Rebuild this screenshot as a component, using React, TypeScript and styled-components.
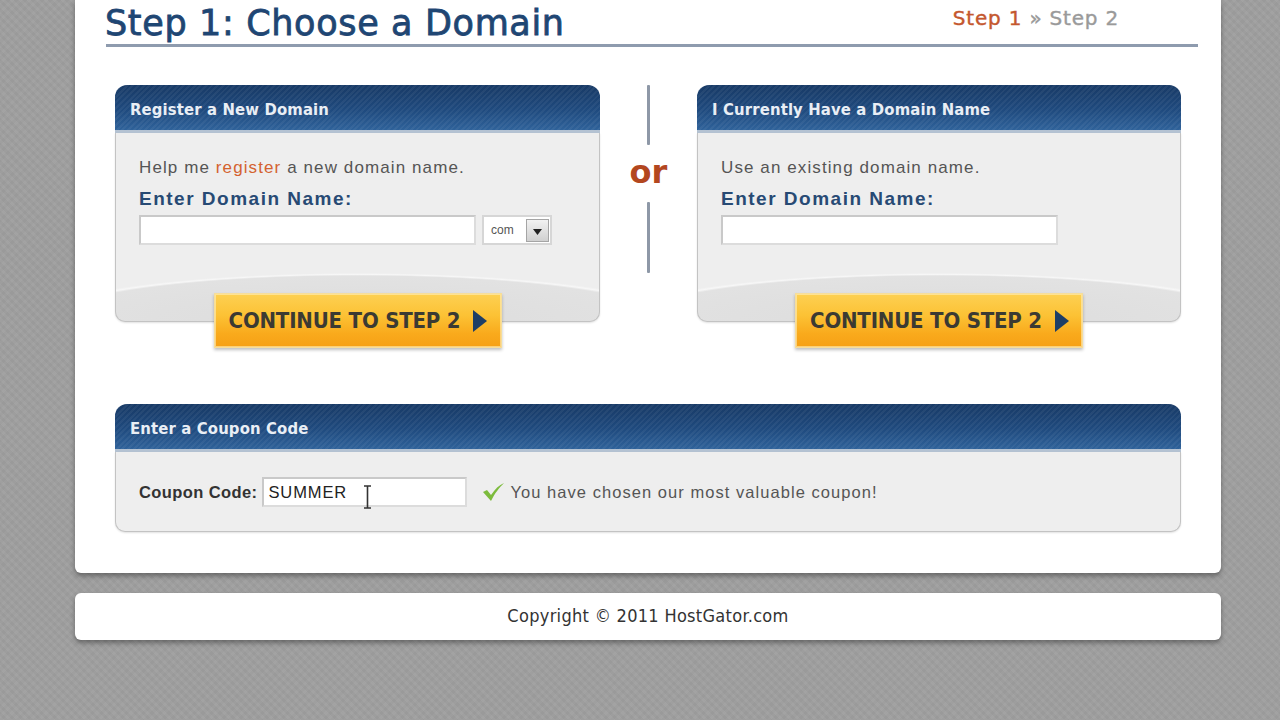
import React from "react";
import styled, { createGlobalStyle } from "styled-components";

const Global = createGlobalStyle`
  html, body { margin: 0; padding: 0; }
  body {
    width: 1280px;
    height: 720px;
    overflow: hidden;
    font-family: "Liberation Sans", Arial, sans-serif;
    background-color: #9f9f9f;
    background-image:
      repeating-linear-gradient(45deg, rgba(255,255,255,0.018) 0 3px, rgba(0,0,0,0.018) 3px 6px),
      repeating-linear-gradient(-45deg, rgba(255,255,255,0.015) 0 3px, rgba(0,0,0,0.015) 3px 6px);
  }
`;

const Page = styled.div`
  display: flex;
  flex-direction: column;
  gap: 20px;
  padding-left: 75px;
  width: 1146px;
`;

const Card = styled.div`
  background: #ffffff;
  border-radius: 0 0 6px 6px;
  box-shadow: 0 3px 5px rgba(0, 0, 0, 0.35);
  padding-bottom: 41px;
`;

const HeadRow = styled.div`
  display: flex;
  justify-content: space-between;
  align-items: flex-end;
  margin: 0 23px 0 31px;
  height: 44px;
  border-bottom: 3px solid #8e9bae;
`;

const Title = styled.h1`
  margin: 0 0 0 -1px;
  font-family: "DejaVu Sans", Verdana, sans-serif;
  font-weight: normal;
  font-size: 35px;
  line-height: 42px;
  color: #1f4673;
  letter-spacing: 0.65px;
  -webkit-text-stroke: 0.8px #1f4673;
`;

const Steps = styled.div`
  font-family: "DejaVu Sans", Verdana, sans-serif;
  font-size: 20px;
  line-height: 26px;
  letter-spacing: 0.8px;
  margin: 0 79px 13px 0;
  color: #9a9a9a;
  -webkit-text-stroke: 0.4px currentColor;
`;

const StepOn = styled.span`
  color: #c4572e;
`;

const Panels = styled.div`
  display: flex;
  margin: 38px 40px 0;
`;

const Column = styled.div<{ $w: number }>`
  width: ${(p) => p.$w}px;
  display: flex;
  flex-direction: column;
  align-items: center;
`;

const Panel = styled.div`
  width: 100%;
  display: flex;
  flex-direction: column;
`;

const PanelHead = styled.div`
  height: 48px;
  box-sizing: border-box;
  padding: 3px 0 0 15px;
  border-radius: 12px 12px 0 0;
  background:
    repeating-linear-gradient(135deg, rgba(255,255,255,0.05) 0 2px, rgba(255,255,255,0) 2px 4px),
    linear-gradient(#183a66 0%, #1f4a7e 55%, #2f629a 100%);
  border-bottom: 3px solid #b4c2d2;
  display: flex;
  align-items: center;
  font-family: "DejaVu Sans Condensed", "DejaVu Sans", sans-serif;
  font-weight: bold;
  font-size: 16.5px;
  letter-spacing: 0.15px;
  color: #e9eef5;
`;

const PanelBody = styled.div<{ $h: number; $curve?: boolean }>`
  height: ${(p) => p.$h}px;
  box-sizing: border-box;
  border: 1px solid #c3c3c3;
  border-top: none;
  border-radius: 0 0 10px 10px;
  box-shadow: 0 1px 2px rgba(0,0,0,0.12);
  background: ${(p) =>
    p.$curve
      ? "radial-gradient(ellipse 68% 48px at 50% 100%, #dcdcdc 0%, #e2e2e2 94%, #f7f7f7 97%, rgba(238,238,238,0) 100%), #eeeeee"
      : "#eeeeee"};
`;

const DomainForm = styled.div`
  padding: 25px 23px 0;
  display: flex;
  flex-direction: column;
`;

const Intro = styled.div`
  font-size: 17px;
  line-height: 20px;
  letter-spacing: 1.1px;
  color: #555555;
`;

const Hl = styled.span`
  color: #d4622f;
`;

const Label = styled.div`
  margin-top: 10px;
  font-size: 19px;
  line-height: 22px;
  letter-spacing: 1.5px;
  font-weight: bold;
  color: #274a74;
`;

const InputRow = styled.div`
  display: flex;
  gap: 6px;
  margin-top: 5px;
`;

const TextBox = styled.div<{ $w: number }>`
  position: relative;
  width: ${(p) => p.$w}px;
  height: 30px;
  box-sizing: border-box;
  background: #ffffff;
  border: 2px solid #c9c9c9;
  border-right-color: #dcdcdc;
  border-bottom-color: #dcdcdc;
  display: flex;
  align-items: center;
  padding-left: 4px;
  font-size: 16.5px;
  letter-spacing: 0.9px;
  color: #222;
`;

const Select = styled.div`
  width: 70px;
  height: 30px;
  box-sizing: border-box;
  border: 2px solid #d6d6d6;
  background: #ffffff;
  display: flex;
  align-items: center;
  justify-content: space-between;
  padding: 0 1px 0 7px;
  font-size: 12px;
  color: #555;
`;

const SelectBtn = styled.div`
  width: 23px;
  height: 23px;
  box-sizing: border-box;
  border: 1px solid #a5a5a5;
  background: linear-gradient(#f2f2f2, #d0d0d0);
  display: flex;
  align-items: center;
  justify-content: center;
  padding-top: 3px;
`;

const Button = styled.div`
  margin-top: -29px;
  width: 288px;
  height: 55px;
  box-sizing: border-box;
  position: relative;
  z-index: 1;
  border: 1px solid #f6dd9a;
  box-shadow: 0 2px 3px rgba(0,0,0,0.25), inset 0 0 0 1px rgba(255,240,190,0.6);
  background: linear-gradient(#fdd052 0%, #fcc235 40%, #f9aa1c 75%, #f6a015 100%);
  display: flex;
  align-items: center;
  justify-content: center;
  gap: 12px;
  padding-left: 2px;
`;

const ButtonText = styled.span`
  font-family: "DejaVu Sans Condensed", "DejaVu Sans", sans-serif;
  font-weight: bold;
  font-size: 22px;
  letter-spacing: -0.2px;
  color: #3b3a33;
`;

const OrCol = styled.div`
  width: 97px;
  display: flex;
  flex-direction: column;
  align-items: center;
`;

const OrLine = styled.div<{ $h: number }>`
  width: 3px;
  height: ${(p) => p.$h}px;
  background: #8e98a7;
  border-radius: 1px;
`;

const OrText = styled.div`
  height: 57px;
  display: flex;
  align-items: center;
  font-family: "DejaVu Sans", sans-serif;
  font-weight: bold;
  font-size: 32px;
  color: #b3471f;
  padding-bottom: 4px;
  box-sizing: border-box;
`;

const CouponWrap = styled.div`
  margin: 56px 40px 0;
`;

const CouponRow = styled.div`
  display: flex;
  align-items: center;
  padding: 25px 23px 0;
  gap: 5px;
`;

const CouponLabel = styled.span`
  font-size: 16.5px;
  letter-spacing: 0.4px;
  font-weight: bold;
  color: #333333;
`;

const Ok = styled.div`
  display: flex;
  align-items: center;
  margin-left: 10px;
  gap: 5px;
  font-size: 16.5px;
  letter-spacing: 1.05px;
  color: #555555;
`;

const Cursor = styled.svg`
  position: absolute;
  left: 99px;
  top: 6px;
`;

const Footer = styled.div`
  height: 47px;
  background: #ffffff;
  border-radius: 6px;
  box-shadow: 0 3px 5px rgba(0, 0, 0, 0.35);
  display: flex;
  align-items: center;
  justify-content: center;
  padding-bottom: 3px;
  box-sizing: border-box;
  font-family: "DejaVu Sans Condensed", "DejaVu Sans", sans-serif;
  font-size: 18px;
  letter-spacing: 0.3px;
  color: #333333;
`;

const Arrow = () => (
  <svg width="16" height="24" viewBox="0 0 16 24">
    <path d="M1 1 L15 12 L1 23 Z" fill="#1e3e66" />
  </svg>
);

const ContinueButton = () => (
  <Button>
    <ButtonText>CONTINUE TO STEP 2</ButtonText>
    <Arrow />
  </Button>
);

export default function App() {
  return (
    <>
      <Global />
      <Page>
        <Card>
          <HeadRow>
            <Title>Step 1: Choose a Domain</Title>
            <Steps>
              <StepOn>Step 1</StepOn> » Step 2
            </Steps>
          </HeadRow>

          <Panels>
            <Column $w={485}>
              <Panel>
                <PanelHead>Register a New Domain</PanelHead>
                <PanelBody $h={189} $curve>
                  <DomainForm>
                    <Intro>
                      Help me <Hl>register</Hl> a new domain name.
                    </Intro>
                    <Label>Enter Domain Name:</Label>
                    <InputRow>
                      <TextBox $w={337} />
                      <Select>
                        com
                        <SelectBtn>
                          <svg width="9" height="6" viewBox="0 0 9 6">
                            <path d="M0 0 L9 0 L4.5 6 Z" fill="#222" />
                          </svg>
                        </SelectBtn>
                      </Select>
                    </InputRow>
                  </DomainForm>
                </PanelBody>
              </Panel>
              <ContinueButton />
            </Column>

            <OrCol>
              <OrLine $h={60} />
              <OrText>or</OrText>
              <OrLine $h={71} />
            </OrCol>

            <Column $w={484}>
              <Panel>
                <PanelHead>I Currently Have a Domain Name</PanelHead>
                <PanelBody $h={189} $curve>
                  <DomainForm>
                    <Intro>Use an existing domain name.</Intro>
                    <Label>Enter Domain Name:</Label>
                    <InputRow>
                      <TextBox $w={337} />
                    </InputRow>
                  </DomainForm>
                </PanelBody>
              </Panel>
              <ContinueButton />
            </Column>
          </Panels>

          <CouponWrap>
            <Panel>
              <PanelHead>Enter a Coupon Code</PanelHead>
              <PanelBody $h={80}>
                <CouponRow>
                  <CouponLabel>Coupon Code:</CouponLabel>
                  <TextBox $w={205}>
                    SUMMER
                    <Cursor width="9" height="24" viewBox="0 0 9 24">
                      <path d="M1 1 H8 M4.5 1 V23 M1 23 H8" stroke="#333" strokeWidth="1.6" fill="none" />
                    </Cursor>
                  </TextBox>
                  <Ok>
                    <svg width="23" height="18" viewBox="0 0 23 18">
                      <path d="M1 9 L5 7 L9 12 C13 6 17 2 22 0 C17 5 13 10 9 18 Z" fill="#7cbb3c" />
                    </svg>
                    You have chosen our most valuable coupon!
                  </Ok>
                </CouponRow>
              </PanelBody>
            </Panel>
          </CouponWrap>
        </Card>

        <Footer>Copyright © 2011 HostGator.com</Footer>
      </Page>
    </>
  );
}
